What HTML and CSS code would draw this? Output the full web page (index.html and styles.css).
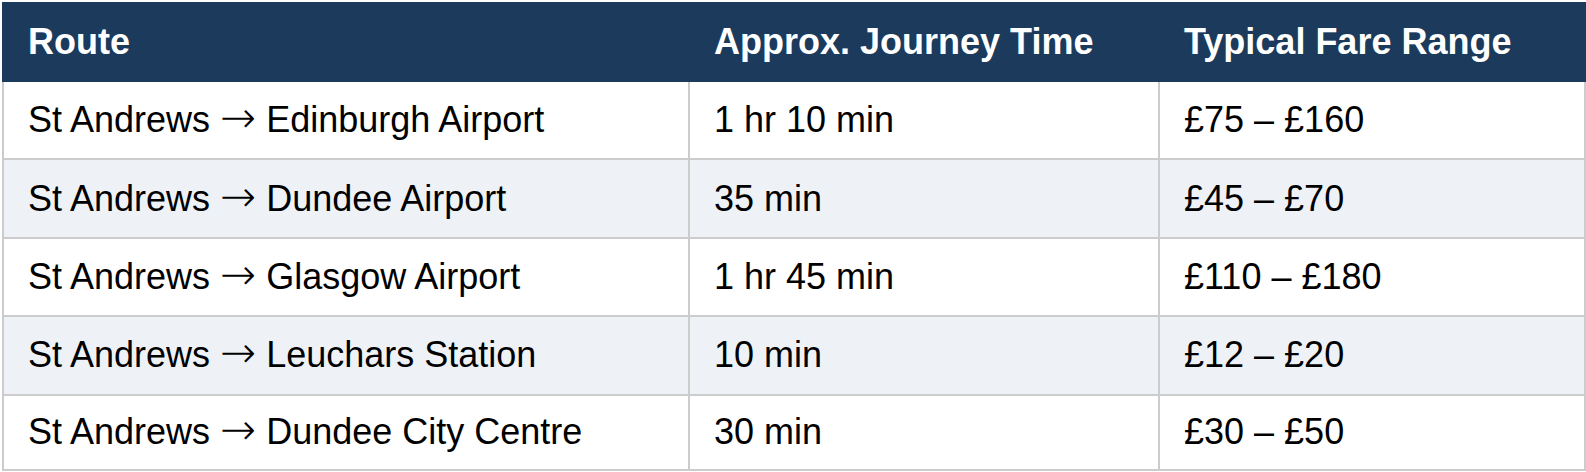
FILE: index.html
```html
<!DOCTYPE html>
<html lang="en">
<head>
<meta charset="utf-8">
<title>Routes</title>
<link rel="stylesheet" href="styles.css">
</head>
<body>
<table class="fares">
  <colgroup>
    <col class="c-route">
    <col class="c-time">
    <col class="c-fare">
  </colgroup>
  <thead>
    <tr>
      <th>Route</th>
      <th>Approx. Journey Time</th>
      <th>Typical Fare Range</th>
    </tr>
  </thead>
  <tbody>
    <tr>
      <td>St Andrews <span class="arrow">→</span> Edinburgh Airport</td>
      <td>1 hr 10 min</td>
      <td>£75 – £160</td>
    </tr>
    <tr>
      <td>St Andrews <span class="arrow">→</span> Dundee Airport</td>
      <td>35 min</td>
      <td>£45 – £70</td>
    </tr>
    <tr>
      <td>St Andrews <span class="arrow">→</span> Glasgow Airport</td>
      <td>1 hr 45 min</td>
      <td>£110 – £180</td>
    </tr>
    <tr>
      <td>St Andrews <span class="arrow">→</span> Leuchars Station</td>
      <td>10 min</td>
      <td>£12 – £20</td>
    </tr>
    <tr>
      <td>St Andrews <span class="arrow">→</span> Dundee City Centre</td>
      <td>30 min</td>
      <td>£30 – £50</td>
    </tr>
  </tbody>
</table>
</body>
</html>
```
FILE: styles.css
```css
html, body {
  margin: 0;
  padding: 0;
  background: #ffffff;
}

body {
  font-family: "Liberation Sans", Arial, sans-serif;
  color: #000000;
}

.fares {
  margin: 2px 0 0 2px;
  width: 1584px;
  table-layout: fixed;
  border-collapse: separate;
  border-spacing: 0;
  font-size: 36px;
  line-height: 41px;
}

.c-route { width: 688px; }
.c-time { width: 470px; }
.c-fare { width: 426px; }

.fares th,
.fares td {
  box-sizing: border-box;
  text-align: left;
  vertical-align: middle;
  padding: 0 24px;
  border-right: 2px solid #cccccc;
  border-bottom: 2px solid #cccccc;
  white-space: nowrap;
}

.fares th:first-child,
.fares td:first-child {
  border-left: 2px solid #cccccc;
}

.fares th {
  background: #1b3a5c;
  color: #ffffff;
  font-weight: 700;
  height: 80px;
  padding-top: 19px;
  padding-bottom: 18px;
  border-color: #1b3a5c;
}

.fares th:first-child {
  border-left-color: #1b3a5c;
}

.fares td {
  height: 78.4px;
  padding-top: 17px;
  padding-bottom: 18px;
}

.fares tbody tr:last-child td {
  height: 75px;
  padding-top: 15px;
  padding-bottom: 17px;
}

.fares tbody tr:nth-child(even) td {
  background: #eef2f7;
}

.arrow {
  font-family: "DejaVu Sans", sans-serif;
  font-weight: 200;
  font-size: 43px;
  line-height: 0;
}
```
